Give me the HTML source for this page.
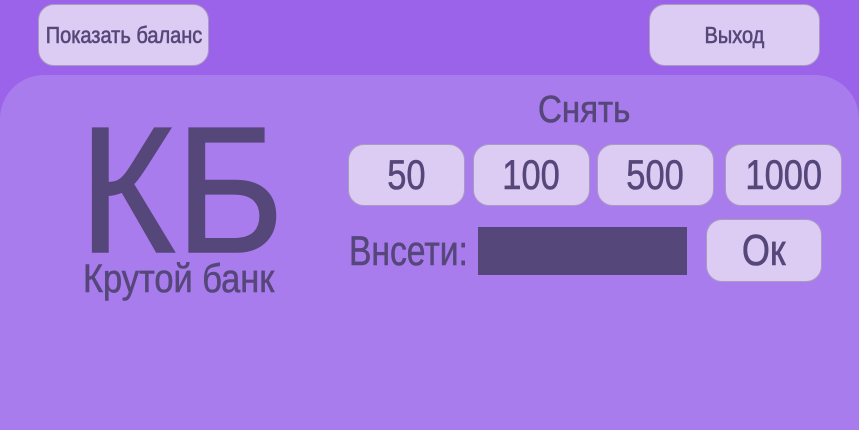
<!DOCTYPE html>
<html><head><meta charset="utf-8"><style>
*{margin:0;padding:0;box-sizing:border-box}
html,body{width:859px;height:430px;overflow:hidden}
body{background:#9b62ea;font-family:"Liberation Sans",sans-serif;color:#56477a;position:relative;-webkit-text-stroke:0.6px #56477a}
.panel{position:absolute;left:0;top:75px;width:859px;height:355px;background:#a87ced;border-radius:44px 44px 0 0}
.btn{position:absolute;background:#dccbf3;border:1px solid #a99bbf;border-radius:16px;display:flex;align-items:center;justify-content:center;color:#56477a;white-space:nowrap}
.btn span{display:inline-block;transform:scaleX(.82);line-height:1}
.t{position:absolute;white-space:nowrap;line-height:1;transform-origin:0 0}
</style></head><body>
<div class="panel"></div>
<div class="btn" style="left:38px;top:4px;width:171px;height:62px;font-size:23px"><span style="transform:scaleX(.87)">Показать баланс</span></div>
<div class="btn" style="left:649px;top:4px;width:171px;height:62px;font-size:23px"><span style="transform:scaleX(.87)">Выход</span></div>
<div class="t" style="left:79px;top:101px;font-size:180px;transform:scaleX(.92);-webkit-text-stroke:1.5px #56477a">КБ</div>
<div class="t" style="left:83px;top:259px;font-size:40px;transform:scaleX(.86)">Крутой банк</div>
<div class="t" style="left:538px;top:91px;font-size:38px;transform:scaleX(.87)">Снять</div>
<div class="btn" style="left:348px;top:144px;width:117px;height:62px;font-size:42px"><span>50</span></div>
<div class="btn" style="left:473px;top:144px;width:117px;height:62px;font-size:42px"><span>100</span></div>
<div class="btn" style="left:597px;top:144px;width:117px;height:62px;font-size:42px"><span>500</span></div>
<div class="btn" style="left:725px;top:144px;width:117px;height:62px;font-size:42px"><span>1000</span></div>
<div class="t" style="left:349px;top:230px;font-size:42px;transform:scaleX(.8)">Внсети:</div>
<div style="position:absolute;left:478px;top:227px;width:209px;height:48px;background:#56477a"></div>
<div class="btn" style="left:706px;top:219px;width:116px;height:63px;font-size:44px"><span>Ок</span></div>
</body></html>
